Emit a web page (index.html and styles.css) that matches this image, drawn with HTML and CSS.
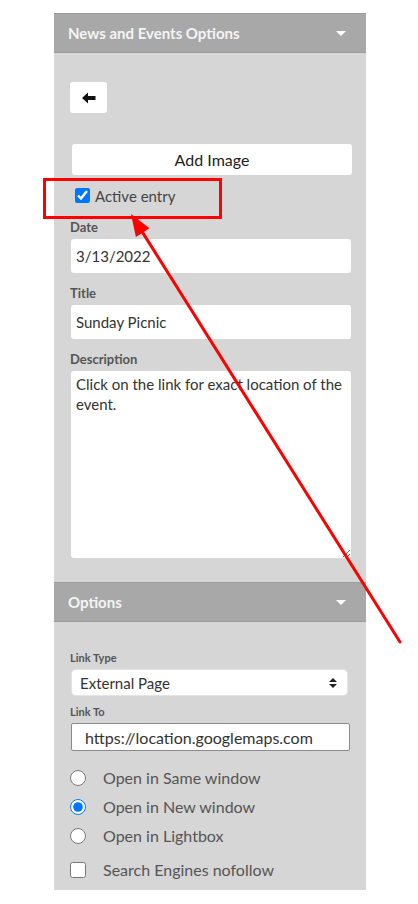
FILE: index.html
```html
<!DOCTYPE html>
<html lang="en">
<head>
  <meta charset="UTF-8" />
  <meta name="viewport" content="width=device-width, initial-scale=1.0"/>
  <title>News and Events Options</title>
  <link rel="stylesheet" href="styles.css">
</head>
<body>
<div class="panel">
  <div class="panel-header">
    <span>News and Events Options</span>
    <span class="caret"></span>
  </div>

  <div class="panel-body">
    <button class="back-button" aria-label="Back">
      <svg width="14" height="12" viewBox="0 0 14 12"><path d="M0 6 L6 0.5 V4 H13.5 V8 H6 V11.5 Z" fill="#111"/></svg>
    </button>

    <button class="add-image">Add Image</button>

    <label class="check-row active-row">
      <input type="checkbox" checked />
      Active entry
    </label>

    <div class="field-label first-label">Date</div>
    <input class="text-input" type="text" value="3/13/2022" />

    <div class="field-label">Title</div>
    <input class="text-input" type="text" value="Sunday Picnic" />

    <div class="field-label">Description</div>
    <textarea class="text-area">Click on the link for exact location of the event.</textarea>
  </div>

  <div class="panel-header">
    <span>Options</span>
    <span class="caret"></span>
  </div>

  <div class="panel-body options-body">
    <div class="small-label">Link Type</div>
    <div class="select-box">
      <span>External Page</span>
      <svg width="10" height="12" viewBox="0 0 10 12"><path d="M1 5 L5 1 L9 5 Z M1 7 L5 11 L9 7 Z" fill="#222"/></svg>
    </div>

    <div class="small-label link-to">Link To</div>
    <input class="link-input" type="text" value="https://location.googlemaps.com" />

    <div class="choices">
      <label class="choice"><input type="radio" name="target" /> Open in Same window</label>
      <label class="choice"><input type="radio" name="target" checked /> Open in New window</label>
      <label class="choice"><input type="radio" name="target" /> Open in Lightbox</label>
      <label class="choice nofollow"><input type="checkbox" /> Search Engines nofollow</label>
    </div>
  </div>
</div>

<!-- annotation drawn over the screenshot -->
<svg class="annotation" width="418" height="904" viewBox="0 0 418 904">
  <rect x="44.5" y="179.5" width="176" height="38" fill="none" stroke="#f00" stroke-width="3"/>
  <line x1="400" y1="642" x2="142.7" y2="232.6" stroke="#f00" stroke-width="3" stroke-linecap="round"/>
  <polygon points="131,214 149.5,228.3 135.9,236.9" fill="#f00"/>
</svg>
</body>
</html>
```

FILE: styles.css
```css
body {
  font-family: Lato, "Open Sans", sans-serif;
  margin: 0;
  background: #ffffff;
  position: relative;
  width: 418px;
  height: 904px;
  overflow: hidden;
}

.panel {
  width: 312px;
  margin: 13px 0 0 54px;
  background: #d6d6d6;
  padding-bottom: 6px;
}

.panel-header {
  height: 40px;
  background: #a8a8a8;
  border-top: 1px solid #9c9c9c;
  border-bottom: 1px solid #9c9c9c;
  box-sizing: border-box;
  display: flex;
  align-items: center;
  justify-content: space-between;
  padding: 0 20px 0 14px;
  color: #f4f4f4;
  font-size: 15px;
  font-weight: 700;
}

.caret {
  width: 0;
  height: 0;
  border-left: 5px solid transparent;
  border-right: 5px solid transparent;
  border-top: 5px solid #fff;
}

.panel-body {
  padding: 29px 15px 24px 16px;
  display: flex;
  flex-direction: column;
  align-items: flex-start;
}

.back-button {
  width: 37px;
  height: 31px;
  background: #fff;
  border: none;
  border-radius: 3px;
  display: flex;
  align-items: center;
  justify-content: center;
  padding: 0;
}

.add-image {
  margin: 31px 0 0 2px;
  width: 280px;
  height: 31px;
  background: #fff;
  border: none;
  border-radius: 3px;
  font-family: inherit;
  font-size: 16px;
  color: #222;
  padding: 0;
}

.check-row {
  display: flex;
  align-items: center;
  font-size: 15px;
  color: #444;
}

.active-row {
  margin-top: 13px;
  height: 15px;
  padding-left: 5px;
}

.active-row input {
  width: 15px;
  height: 15px;
  margin: 0 5px 0 0;
}

.field-label {
  margin: 12px 0 4px 0;
  font-size: 13px;
  line-height: 16px;
  font-weight: 700;
  color: #555;
}

.first-label {
  margin-top: 16px;
}

.text-input {
  width: 280px;
  height: 34px;
  margin-left: 1px;
  box-sizing: border-box;
  border: none;
  border-radius: 3px;
  background: #fff;
  padding: 0 5px;
  font-family: inherit;
  font-size: 15px;
  color: #333;
}

.text-area {
  width: 280px;
  height: 187px;
  margin: 0 0 0 1px;
  box-sizing: border-box;
  border: none;
  border-radius: 3px;
  background: #fff;
  padding: 3px 5px;
  font-family: inherit;
  font-size: 15px;
  line-height: 20px;
  color: #333;
  resize: both;
}

.options-body {
  padding: 29px 15px 0 16px;
}

.small-label {
  font-size: 11px;
  line-height: 14px;
  font-weight: 700;
  color: #555;
  margin-bottom: 5px;
}

.link-to {
  margin-top: 10px;
  margin-bottom: 4px;
}

.select-box {
  margin-left: 2px;
  width: 275px;
  height: 25px;
  box-sizing: border-box;
  background: #fff;
  border-radius: 4px;
  box-shadow: 0 0 0 1px #e4e4e4;
  display: flex;
  align-items: center;
  justify-content: space-between;
  padding: 0 9px 0 8px;
  font-size: 15px;
  color: #333;
}

.link-input {
  margin-left: 1px;
  width: 279px;
  height: 28px;
  box-sizing: border-box;
  border: 1px solid #8a8a8a;
  border-radius: 2px;
  background: #fff;
  padding: 0 0 0 13px;
  font-family: inherit;
  font-size: 16px;
  color: #333;
}

.choices {
  margin-top: 12px;
  display: flex;
  flex-direction: column;
}

.choice {
  height: 29px;
  display: flex;
  align-items: center;
  font-size: 16px;
  color: #555;
}

.choice input {
  width: 16px;
  height: 16px;
  margin: 0 17px 0 0;
}

.nofollow {
  margin-top: 5px;
}

.annotation {
  position: absolute;
  top: 0;
  left: 0;
  pointer-events: none;
}
```
